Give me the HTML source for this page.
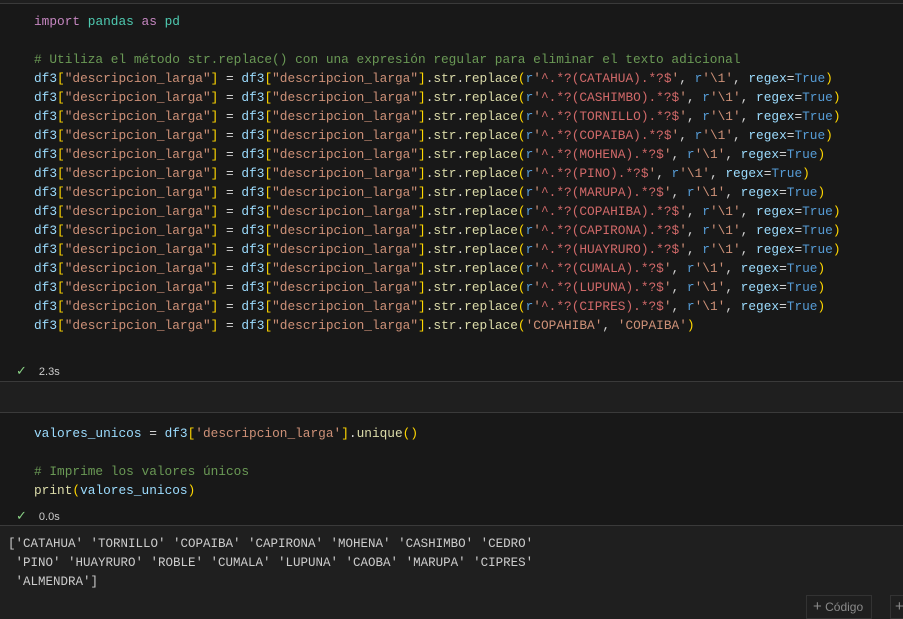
<html><head><style>
body{margin:0;width:903px;height:618px;background:#1f1f1f;overflow:hidden;font-family:"Liberation Mono",monospace;}
.c{position:absolute;left:0;width:903px;background:#181818;}
pre{margin:0;font-family:"Liberation Mono",monospace;font-size:12.8px;line-height:19px;color:#d4d4d4;position:absolute;white-space:pre;}
.k{color:#c586c0}.m{color:#4ec9b0}.v{color:#9cdcfe}.s{color:#ce9178}.b{color:#ffd700}.f{color:#dcdcaa}.g{color:#6a9955}.r{color:#569cd6}.x{color:#d16969}.p{color:#da70d6}
.st{position:absolute;left:16px;font-family:"Liberation Sans",sans-serif;font-size:11px;color:#cccccc}
.st i{font-style:normal;color:#89d185;margin-right:12px;font-size:13px}
.ln{position:absolute;left:0;width:903px;height:1px;background:#3a3a3a}
</style></head><body>
<div class="ln" style="top:3px"></div>
<div class="c" style="top:4px;height:377px"></div>
<pre style="left:34px;top:12px"><span class="k">import</span> <span class="m">pandas</span> <span class="k">as</span> <span class="m">pd</span>

<span class="g"># Utiliza el método str.replace() con una expresión regular para eliminar el texto adicional</span>
<span class="v">df3</span><span class="b">[</span><span class="s">"descripcion_larga"</span><span class="b">]</span> = <span class="v">df3</span><span class="b">[</span><span class="s">"descripcion_larga"</span><span class="b">]</span>.<span class="f">str</span>.<span class="f">replace</span><span class="b">(</span><span class="r">r</span><span class="s">'</span><span class="x">^.*?(CATAHUA).*?$</span><span class="s">'</span>, <span class="r">r</span><span class="s">'\1'</span>, <span class="v">regex</span>=<span class="r">True</span><span class="b">)</span>
<span class="v">df3</span><span class="b">[</span><span class="s">"descripcion_larga"</span><span class="b">]</span> = <span class="v">df3</span><span class="b">[</span><span class="s">"descripcion_larga"</span><span class="b">]</span>.<span class="f">str</span>.<span class="f">replace</span><span class="b">(</span><span class="r">r</span><span class="s">'</span><span class="x">^.*?(CASHIMBO).*?$</span><span class="s">'</span>, <span class="r">r</span><span class="s">'\1'</span>, <span class="v">regex</span>=<span class="r">True</span><span class="b">)</span>
<span class="v">df3</span><span class="b">[</span><span class="s">"descripcion_larga"</span><span class="b">]</span> = <span class="v">df3</span><span class="b">[</span><span class="s">"descripcion_larga"</span><span class="b">]</span>.<span class="f">str</span>.<span class="f">replace</span><span class="b">(</span><span class="r">r</span><span class="s">'</span><span class="x">^.*?(TORNILLO).*?$</span><span class="s">'</span>, <span class="r">r</span><span class="s">'\1'</span>, <span class="v">regex</span>=<span class="r">True</span><span class="b">)</span>
<span class="v">df3</span><span class="b">[</span><span class="s">"descripcion_larga"</span><span class="b">]</span> = <span class="v">df3</span><span class="b">[</span><span class="s">"descripcion_larga"</span><span class="b">]</span>.<span class="f">str</span>.<span class="f">replace</span><span class="b">(</span><span class="r">r</span><span class="s">'</span><span class="x">^.*?(COPAIBA).*?$</span><span class="s">'</span>, <span class="r">r</span><span class="s">'\1'</span>, <span class="v">regex</span>=<span class="r">True</span><span class="b">)</span>
<span class="v">df3</span><span class="b">[</span><span class="s">"descripcion_larga"</span><span class="b">]</span> = <span class="v">df3</span><span class="b">[</span><span class="s">"descripcion_larga"</span><span class="b">]</span>.<span class="f">str</span>.<span class="f">replace</span><span class="b">(</span><span class="r">r</span><span class="s">'</span><span class="x">^.*?(MOHENA).*?$</span><span class="s">'</span>, <span class="r">r</span><span class="s">'\1'</span>, <span class="v">regex</span>=<span class="r">True</span><span class="b">)</span>
<span class="v">df3</span><span class="b">[</span><span class="s">"descripcion_larga"</span><span class="b">]</span> = <span class="v">df3</span><span class="b">[</span><span class="s">"descripcion_larga"</span><span class="b">]</span>.<span class="f">str</span>.<span class="f">replace</span><span class="b">(</span><span class="r">r</span><span class="s">'</span><span class="x">^.*?(PINO).*?$</span><span class="s">'</span>, <span class="r">r</span><span class="s">'\1'</span>, <span class="v">regex</span>=<span class="r">True</span><span class="b">)</span>
<span class="v">df3</span><span class="b">[</span><span class="s">"descripcion_larga"</span><span class="b">]</span> = <span class="v">df3</span><span class="b">[</span><span class="s">"descripcion_larga"</span><span class="b">]</span>.<span class="f">str</span>.<span class="f">replace</span><span class="b">(</span><span class="r">r</span><span class="s">'</span><span class="x">^.*?(MARUPA).*?$</span><span class="s">'</span>, <span class="r">r</span><span class="s">'\1'</span>, <span class="v">regex</span>=<span class="r">True</span><span class="b">)</span>
<span class="v">df3</span><span class="b">[</span><span class="s">"descripcion_larga"</span><span class="b">]</span> = <span class="v">df3</span><span class="b">[</span><span class="s">"descripcion_larga"</span><span class="b">]</span>.<span class="f">str</span>.<span class="f">replace</span><span class="b">(</span><span class="r">r</span><span class="s">'</span><span class="x">^.*?(COPAHIBA).*?$</span><span class="s">'</span>, <span class="r">r</span><span class="s">'\1'</span>, <span class="v">regex</span>=<span class="r">True</span><span class="b">)</span>
<span class="v">df3</span><span class="b">[</span><span class="s">"descripcion_larga"</span><span class="b">]</span> = <span class="v">df3</span><span class="b">[</span><span class="s">"descripcion_larga"</span><span class="b">]</span>.<span class="f">str</span>.<span class="f">replace</span><span class="b">(</span><span class="r">r</span><span class="s">'</span><span class="x">^.*?(CAPIRONA).*?$</span><span class="s">'</span>, <span class="r">r</span><span class="s">'\1'</span>, <span class="v">regex</span>=<span class="r">True</span><span class="b">)</span>
<span class="v">df3</span><span class="b">[</span><span class="s">"descripcion_larga"</span><span class="b">]</span> = <span class="v">df3</span><span class="b">[</span><span class="s">"descripcion_larga"</span><span class="b">]</span>.<span class="f">str</span>.<span class="f">replace</span><span class="b">(</span><span class="r">r</span><span class="s">'</span><span class="x">^.*?(HUAYRURO).*?$</span><span class="s">'</span>, <span class="r">r</span><span class="s">'\1'</span>, <span class="v">regex</span>=<span class="r">True</span><span class="b">)</span>
<span class="v">df3</span><span class="b">[</span><span class="s">"descripcion_larga"</span><span class="b">]</span> = <span class="v">df3</span><span class="b">[</span><span class="s">"descripcion_larga"</span><span class="b">]</span>.<span class="f">str</span>.<span class="f">replace</span><span class="b">(</span><span class="r">r</span><span class="s">'</span><span class="x">^.*?(CUMALA).*?$</span><span class="s">'</span>, <span class="r">r</span><span class="s">'\1'</span>, <span class="v">regex</span>=<span class="r">True</span><span class="b">)</span>
<span class="v">df3</span><span class="b">[</span><span class="s">"descripcion_larga"</span><span class="b">]</span> = <span class="v">df3</span><span class="b">[</span><span class="s">"descripcion_larga"</span><span class="b">]</span>.<span class="f">str</span>.<span class="f">replace</span><span class="b">(</span><span class="r">r</span><span class="s">'</span><span class="x">^.*?(LUPUNA).*?$</span><span class="s">'</span>, <span class="r">r</span><span class="s">'\1'</span>, <span class="v">regex</span>=<span class="r">True</span><span class="b">)</span>
<span class="v">df3</span><span class="b">[</span><span class="s">"descripcion_larga"</span><span class="b">]</span> = <span class="v">df3</span><span class="b">[</span><span class="s">"descripcion_larga"</span><span class="b">]</span>.<span class="f">str</span>.<span class="f">replace</span><span class="b">(</span><span class="r">r</span><span class="s">'</span><span class="x">^.*?(CIPRES).*?$</span><span class="s">'</span>, <span class="r">r</span><span class="s">'\1'</span>, <span class="v">regex</span>=<span class="r">True</span><span class="b">)</span>
<span class="v">df3</span><span class="b">[</span><span class="s">"descripcion_larga"</span><span class="b">]</span> = <span class="v">df3</span><span class="b">[</span><span class="s">"descripcion_larga"</span><span class="b">]</span>.<span class="f">str</span>.<span class="f">replace</span><span class="b">(</span><span class="s">'COPAHIBA'</span>, <span class="s">'COPAIBA'</span><span class="b">)</span></pre>
<div class="st" style="top:363px"><i>✓</i>2.3s</div>
<div class="ln" style="top:381px"></div>
<div class="ln" style="top:412px"></div>
<div class="c" style="top:413px;height:112px"></div>
<pre style="left:34px;top:424px"><span class="v">valores_unicos</span> = <span class="v">df3</span><span class="b">[</span><span class="s">'descripcion_larga'</span><span class="b">]</span>.<span class="f">unique</span><span class="b">()</span>

<span class="g"># Imprime los valores únicos</span>
<span class="f">print</span><span class="b">(</span><span class="v">valores_unicos</span><span class="b">)</span></pre>
<div class="st" style="top:508px"><i>✓</i>0.0s</div>
<div class="ln" style="top:525px"></div>
<pre style="left:8px;top:535px;color:#cccccc;font-size:12.5px">['CATAHUA' 'TORNILLO' 'COPAIBA' 'CAPIRONA' 'MOHENA' 'CASHIMBO' 'CEDRO'
 'PINO' 'HUAYRURO' 'ROBLE' 'CUMALA' 'LUPUNA' 'CAOBA' 'MARUPA' 'CIPRES'
 'ALMENDRA']</pre>
<div style="position:absolute;left:806px;top:595px;width:66px;height:24px;border:1px solid #333;box-sizing:border-box;font-family:'Liberation Sans',sans-serif;font-size:12px;color:#8a8a8a;line-height:22px;padding-left:6px"><span style="font-size:15px">+</span> Código</div>
<div style="position:absolute;left:890px;top:595px;width:20px;height:24px;border:1px solid #333;box-sizing:border-box;font-family:'Liberation Sans',sans-serif;font-size:15px;color:#8a8a8a;line-height:22px;padding-left:4px">+</div>
</body></html>
